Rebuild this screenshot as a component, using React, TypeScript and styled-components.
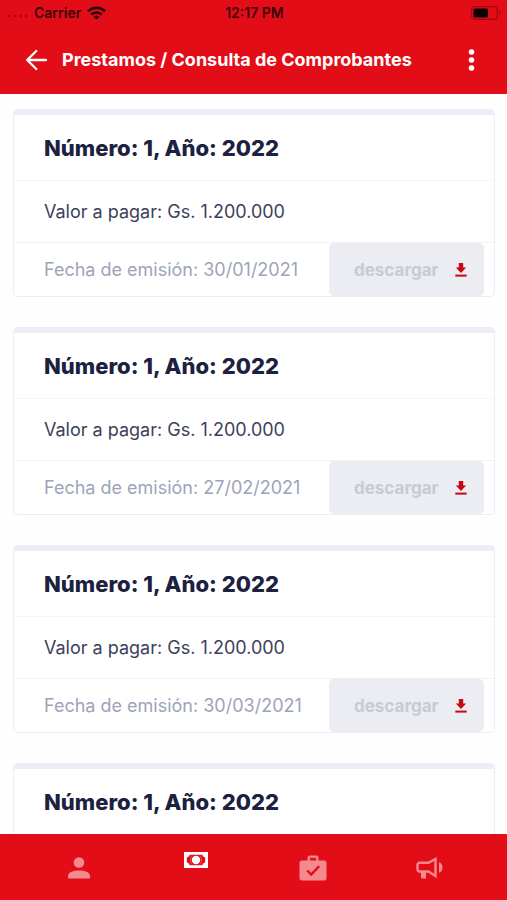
import React from "react";
import styled, { createGlobalStyle } from "styled-components";

const RED = "#e30d18";

const GlobalStyle = createGlobalStyle`
  *, *::before, *::after { box-sizing: border-box; }
  body {
    margin: 0;
    background: #fefefe;
    font-family: Inter, Roboto, "Liberation Sans", sans-serif;
  }
  button { font: inherit; border: 0; padding: 0; background: none; cursor: pointer; }
  svg { display: block; flex: none; }
`;

const Screen = styled.div`
  display: flex;
  flex-direction: column;
  height: 100vh;
`;

const Top = styled.header`
  flex: none;
  background: ${RED};
`;

const StatusBar = styled.div`
  display: grid;
  grid-template-columns: 1fr auto 1fr;
  align-items: center;
  height: 26px;
  padding: 0 6px 0 8px;
  font-size: 14px;
  line-height: 20px;
  font-weight: 600;
  color: #3a0508;
`;

const StatusGroup = styled.div<{ $end?: boolean }>`
  display: flex;
  align-items: center;
  gap: 6px;
  justify-content: ${(p) => (p.$end ? "flex-end" : "flex-start")};
`;

const TitleBar = styled.div`
  display: flex;
  align-items: center;
  height: 68px;
  padding: 0 24px;
  color: #fff;
`;

const PageTitle = styled.h1`
  flex: 1;
  margin: 0 0 0 14px;
  font-size: 18px;
  line-height: 24px;
  font-weight: 700;
  white-space: nowrap;
`;

const IconButton = styled.button`
  color: #fff;
`;

const List = styled.main`
  flex: 1;
  min-height: 0;
  overflow-y: auto;
  scrollbar-width: none;
  display: flex;
  flex-direction: column;
  gap: 30px;
  padding: 15px 12px 0 13px;
`;

const Card = styled.article`
  flex: none;
  border: 1px solid #eceef5;
  border-top: 6px solid #ecedf6;
  border-radius: 5px;
  background: #fff;
`;

const CardTitle = styled.h2`
  margin: 0;
  padding: 19px 30px 18px;
  border-bottom: 1px solid #f4f5f8;
  font-size: 22px;
  line-height: 28px;
  font-weight: 800;
  color: #1c2140;
`;

const Amount = styled.p`
  margin: 0;
  padding: 19px 30px 18px;
  border-bottom: 1px solid #f0f2f6;
  font-size: 18px;
  line-height: 24px;
  color: #3c405b;
`;

const CardFooter = styled.footer`
  display: flex;
  align-items: center;
  justify-content: space-between;
  padding: 0 10px 0 30px;
  font-size: 18px;
  line-height: 24px;
  color: #9da4b9;
`;

const DownloadButton = styled.button`
  display: flex;
  align-items: center;
  justify-content: space-between;
  width: 155px;
  height: 53px;
  padding: 0 17px 0 25px;
  border-radius: 5px;
  background: #ebedf2;
  font-size: 17px;
  font-weight: 700;
  color: #c6cbd6;
`;

const TabBar = styled.nav`
  flex: none;
  display: flex;
  height: 66px;
  padding: 2px 18px 0 20px;
  background: ${RED};
`;

const Tab = styled.button<{ $active?: boolean }>`
  flex: 1;
  display: flex;
  justify-content: center;
  align-items: center;
  padding-bottom: ${(p) => (p.$active ? "16px" : "0")};
  color: ${(p) => (p.$active ? "#fff" : "#f48a8e")};
`;

const SignalIcon = () => (
  <svg width="20" height="14" viewBox="0 0 20 14" fill="#99090f" aria-hidden="true">
    <circle cx="1.500" cy="10" r="1.200" />
    <circle cx="7.200" cy="10" r="1.200" />
    <circle cx="12.900" cy="10" r="1.200" />
    <circle cx="18.600" cy="10" r="1.200" />
  </svg>
);

const WifiIcon = () => (
  <svg width="19" height="14" viewBox="0 0 19 14" fill="none" stroke="#260305" strokeWidth="2.6" aria-hidden="true">
    <path d="M1 5.2a12.2 12.2 0 0 1 17 0" />
    <path d="M4.2 8.6a7.6 7.6 0 0 1 10.6 0" />
    <path d="M9.500 13.600 6.700 10.900a4 4 0 0 1 5.600 0z" fill="#260305" stroke="none" />
  </svg>
);

const BatteryIcon = () => (
  <svg width="30" height="14" viewBox="0 0 30 14" aria-hidden="true">
    <rect x="0.700" y="0.700" width="25.600" height="12.600" rx="3" fill="none" stroke="#9c0910" strokeWidth="1.200" />
    <rect x="2.500" y="2.500" width="14.500" height="9" rx="1.500" fill="#0d0102" />
    <path d="M27.800 4.800c1.400.5 1.400 3.900 0 4.400z" fill="#9c0910" />
  </svg>
);

const BackIcon = () => (
  <svg width="24" height="24" viewBox="0 0 24 24" fill="none" stroke="currentColor" strokeWidth="2.300" strokeLinecap="round" strokeLinejoin="round" aria-hidden="true">
    <path d="M22 12H3.200M12.300 3 3.200 12l9.100 9" />
  </svg>
);

const MoreIcon = () => (
  <svg width="24" height="24" viewBox="0 0 24 24" fill="currentColor" aria-hidden="true">
    <circle cx="12.500" cy="4" r="2.800" />
    <circle cx="12.500" cy="12" r="2.800" />
    <circle cx="12.500" cy="20" r="2.800" />
  </svg>
);

const DownloadIcon = () => (
  <svg width="12" height="14" viewBox="0 0 12 14" fill="#c90613" aria-hidden="true">
    <path d="M3.800 0h4.400v4.400h3L6 10 .8 4.400h3z" />
    <path d="M.3 11.600h11.400v2H.3z" />
  </svg>
);

const PersonIcon = () => (
  <svg width="22" height="22" viewBox="0 0 22 22" fill="currentColor" aria-hidden="true">
    <circle cx="11" cy="5.500" r="5.300" />
    <path d="M0 21.500v-2.700c0-3.600 5.500-5.400 11-5.400s11 1.800 11 5.400v2.700z" />
  </svg>
);

const MoneyIcon = () => (
  <svg width="24" height="16" viewBox="0 0 24 16" aria-hidden="true">
    <path fill="currentColor" d="M0 0h24v16H0z" />
    <path fill={RED} d="M5.500 2.700h13c0 1.500 1 2.400 2.700 2.700v5.200c-1.700.3-2.700 1.200-2.700 2.700h-13c0-1.500-1-2.400-2.700-2.700V5.400c1.700-.3 2.700-1.200 2.700-2.700z" />
    <path fill="none" stroke="currentColor" strokeWidth="0.800" d="M8.200 3.200C6 5.500 6 10.500 8.200 12.800M15.800 3.200c2.200 2.300 2.200 7.300 0 9.600" opacity="0.350" />
    <circle cx="12" cy="8" r="4.200" fill="currentColor" />
  </svg>
);

const BriefcaseIcon = () => (
  <svg width="28" height="26" viewBox="0 0 28 26" fill="none" aria-hidden="true">
    <path d="M9.700 6V2.800c0-.7.500-1.200 1.200-1.200h6.200c.7 0 1.200.5 1.200 1.200V6" stroke="currentColor" strokeWidth="2.400" />
    <rect x="0.500" y="5.500" width="27" height="20" rx="2.500" fill="currentColor" />
    <path d="m8.200 15.500 4 4 8-8.300" stroke={RED} strokeWidth="2.400" />
  </svg>
);

const MegaphoneIcon = () => (
  <svg width="28" height="24" viewBox="0 0 28 24" fill="none" stroke="currentColor" aria-hidden="true">
    <path d="M3.500 6.700h9L19.500 3v17l-7-4.500h-9a2 2 0 0 1-2-2V8.700a2 2 0 0 1 2-2z" strokeWidth="2.400" />
    <path d="M5 15.500h5v7H6.200a1.200 1.200 0 0 1-1.200-1.200z" fill="currentColor" stroke="none" />
    <path d="M23 6.200c4.700 1.600 4.700 9 0 10.600z" fill="currentColor" stroke="none" />
  </svg>
);

const receipts = [
  { id: 1, issued: "30/01/2021" },
  { id: 2, issued: "27/02/2021" },
  { id: 3, issued: "30/03/2021" },
  { id: 4, issued: "30/04/2021" },
];

const tabs = [
  { label: "Perfil", Icon: PersonIcon, active: false },
  { label: "Préstamos", Icon: MoneyIcon, active: true },
  { label: "Trabajo", Icon: BriefcaseIcon, active: false },
  { label: "Novedades", Icon: MegaphoneIcon, active: false },
];

export default function App() {
  return (
    <>
      <GlobalStyle />
      <Screen>
        <Top>
          <StatusBar>
            <StatusGroup>
              <SignalIcon />
              <span>Carrier</span>
              <WifiIcon />
            </StatusGroup>
            <span>12:17 PM</span>
            <StatusGroup $end>
              <BatteryIcon />
            </StatusGroup>
          </StatusBar>
          <TitleBar>
            <IconButton aria-label="Volver">
              <BackIcon />
            </IconButton>
            <PageTitle>Prestamos / Consulta de Comprobantes</PageTitle>
            <IconButton aria-label="Más opciones">
              <MoreIcon />
            </IconButton>
          </TitleBar>
        </Top>
        <List>
          {receipts.map((r) => (
            <Card key={r.id}>
              <CardTitle>Número: 1, Año: 2022</CardTitle>
              <Amount>Valor a pagar: Gs. 1.200.000</Amount>
              <CardFooter>
                <span>Fecha de emisión: {r.issued}</span>
                <DownloadButton>
                  descargar
                  <DownloadIcon />
                </DownloadButton>
              </CardFooter>
            </Card>
          ))}
        </List>
        <TabBar>
          {tabs.map(({ label, Icon, active }) => (
            <Tab key={label} aria-label={label} $active={active}>
              <Icon />
            </Tab>
          ))}
        </TabBar>
      </Screen>
    </>
  );
}
